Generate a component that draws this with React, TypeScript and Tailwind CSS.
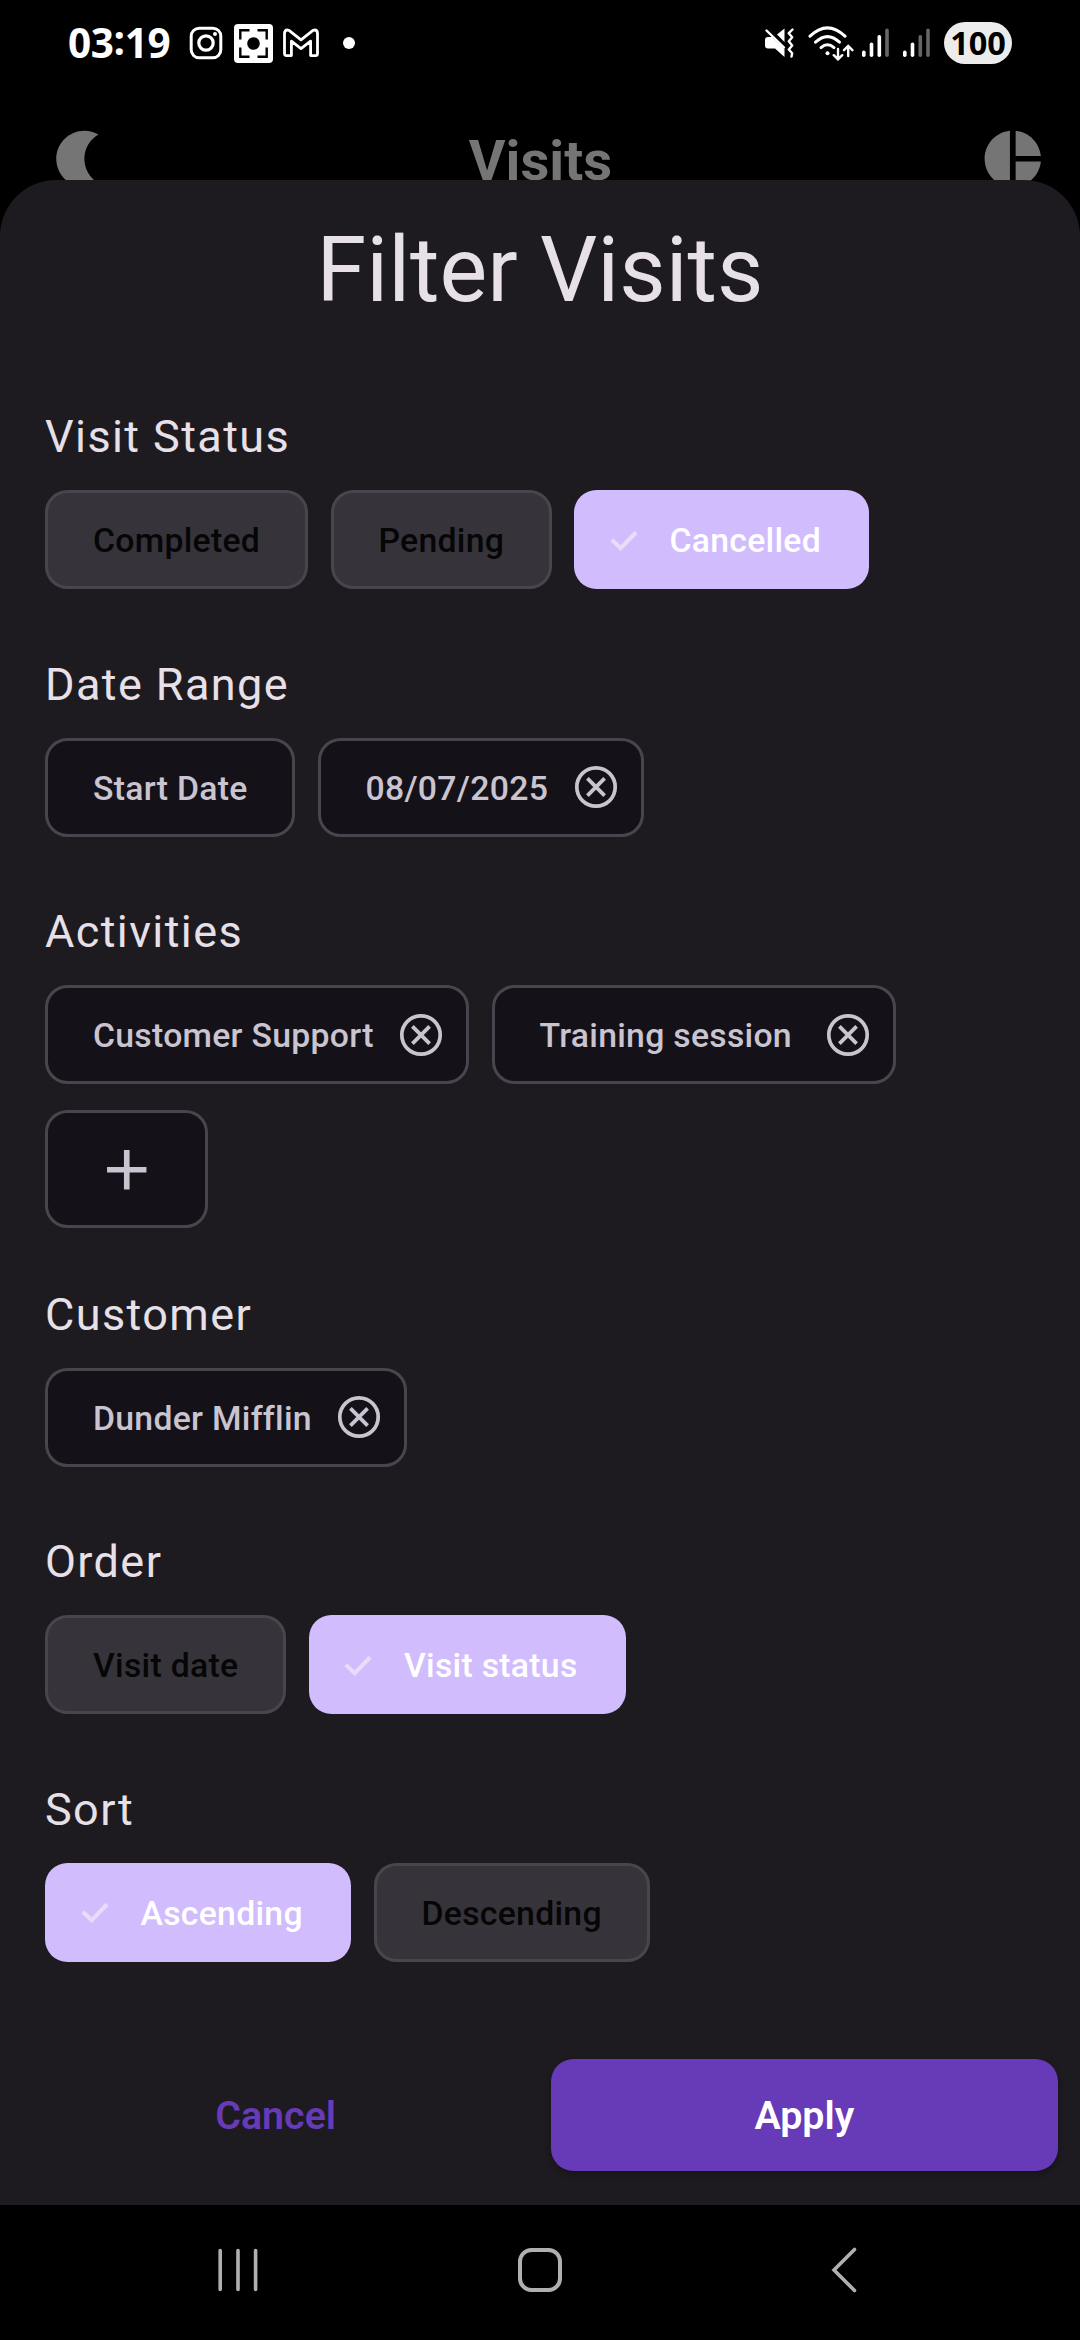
import type { ReactNode } from "react";

function Close() {
  return (
    <svg viewBox="0 0 50 50" className="h-[50px] w-[50px] shrink-0" fill="none" stroke="#cac4d0">
      <circle cx="25" cy="25" r="19.2" strokeWidth="3.7" />
      <path d="M16.4 16.4 L33.6 33.6 M33.6 16.4 L16.4 33.6" strokeWidth="3.8" />
    </svg>
  );
}

const chipBase =
  "flex h-[99px] shrink-0 items-center rounded-[22.5px] text-[33.75px] font-medium tracking-[0.28px] whitespace-nowrap";

function Disabled({ width, children }: { width: string; children: ReactNode }) {
  return (
    <button className={`${chipBase} ${width} border-[3px] border-[#49454f] bg-[#36333a] pt-[4px] pl-[45px] text-[#060607]`}>
      {children}
    </button>
  );
}

function Selected({ width, children }: { width: string; children: ReactNode }) {
  return (
    <button className={`${chipBase} ${width} bg-[#d1bcfd] pl-[34.5px] text-white`}>
      <svg viewBox="0 0 30 24" className="mr-[31px] h-[24px] w-[30px] shrink-0">
        <path d="M2.7 11.8 L11.7 20.2 L27.2 4.2" fill="none" stroke="#e8ddf8" strokeWidth="4.1" />
      </svg>
      <span className="pt-[4px]">{children}</span>
    </button>
  );
}

function Outlined({ width, removable, children }: { width: string; removable?: boolean; children: ReactNode }) {
  return (
    <button
      className={`${chipBase} ${width} justify-between border-[3px] border-[#49454f] bg-[#141218] pr-[20px] pl-[45px] text-[#cac4d0]`}
    >
      <span className="pt-[4px]">{children}</span>
      {removable && <Close />}
    </button>
  );
}

function Section({ title, height, children }: { title: string; height: string; children: ReactNode }) {
  return (
    <section className={`${height} shrink-0`}>
      <h2 className="text-[45px] leading-[67px] tracking-[1.4px] text-[#e7e0e8]">{title}</h2>
      <div className="mt-[20.25px] flex flex-wrap gap-x-[22.5px] gap-y-[26px]">{children}</div>
    </section>
  );
}

function StatusBar() {
  return (
    <div className="flex h-[86px] shrink-0 items-center justify-between pr-[68px] pl-[68px]">
      <div className="flex items-center">
        <span className="w-[103px] font-['Open_Sans',sans-serif] text-[40.5px] leading-none font-bold tracking-[-0.4px] whitespace-nowrap text-white">
          03<span className="relative -top-[3px]">:</span>19
        </span>
        <svg viewBox="0 0 34 34" className="ml-[18px] h-[34px] w-[34px]" fill="none" stroke="white">
          <rect x="2.2" y="2.2" width="29.6" height="29.6" rx="8" strokeWidth="3" />
          <circle cx="17" cy="17" r="7.2" strokeWidth="3.2" />
          <circle cx="26" cy="8" r="2" fill="white" stroke="none" />
        </svg>
        <svg viewBox="0 0 39 39" className="ml-[10.5px] h-[39px] w-[39px]">
          <rect width="39" height="39" rx="4" fill="white" />
          <circle cx="19.5" cy="19.5" r="6.3" fill="black" />
          <path
            d="M6.3 15.5 V6.3 H15.5 M23.5 6.3 H32.7 V15.5 M32.7 23.5 V32.7 H23.5 M15.5 32.7 H6.3 V23.5"
            fill="none"
            stroke="black"
            strokeWidth="2.4"
          />
        </svg>
        <svg viewBox="0 0 38 30" className="ml-[9px] h-[30px] w-[38px]">
          <path
            d="M2.5 5.5 Q2.5 2 5.5 2 L7 2.4 L19 11.8 L31 2.4 L32.5 2 Q35.5 2 35.5 5.5 V25.5 Q35.5 27.6 33.5 27.6 H28.6 V13.2 L19 20.6 L9.4 13.2 V27.6 H4.5 Q2.5 27.6 2.5 25.5 Z"
            fill="none"
            stroke="white"
            strokeWidth="2.8"
            strokeLinejoin="round"
          />
        </svg>
        <span className="ml-[23.5px] h-[12px] w-[12px] rounded-full bg-white" />
      </div>
      <div className="flex items-center">
        <svg viewBox="0 0 30 30" className="h-[30px] w-[30px]">
          <path d="M1 12 Q1 9 4 9 H8 L20.5 21 V29 L11 20.5 H4 Q1 20.5 1 17.5 Z" fill="white" />
          <path d="M13 6.5 L20.5 0.5 V14 Z" fill="white" />
          <path d="M2.5 2.5 L20 19.5" stroke="white" strokeWidth="2.4" strokeLinecap="round" />
          <path
            d="M28.5 1.5 L24.8 5.2 L28.2 9.2 L24.8 13.2 L28.2 17.5 L24.8 21.5 L28.2 25.2 L27.5 28.5"
            fill="none"
            stroke="white"
            strokeWidth="2.4"
            strokeLinecap="round"
            strokeLinejoin="round"
          />
        </svg>
        <svg viewBox="0 0 46 36" className="ml-[14px] h-[36px] w-[46px]" fill="none" stroke="white" strokeLinecap="round">
          <path d="M2 11.2 Q19.5 -5.5 37 11.2" strokeWidth="3" />
          <path d="M7.5 17.2 Q19.5 6 31.5 17.2" strokeWidth="3" />
          <path d="M13 22.6 Q19.5 16.8 26 22.6" strokeWidth="3" />
          <circle cx="19.5" cy="28.2" r="2" fill="white" stroke="none" />
          <path d="M30 24 V34 M25.8 30.2 L30 34.4 L34.2 30.2 M40.2 31 V21.5 M36 25.2 L40.2 21 L44.4 25.2" strokeWidth="2.4" />
        </svg>
        <svg viewBox="0 0 28 30" className="ml-[8px] h-[30px] w-[28px]">
          <rect x="0" y="22.5" width="3.6" height="6.5" rx="1.8" fill="white" />
          <rect x="7.7" y="14.5" width="3.6" height="14.5" rx="1.8" fill="white" />
          <rect x="15.5" y="7" width="3.6" height="22" rx="1.8" fill="white" />
          <rect x="23.2" y="0.5" width="3.6" height="28.5" rx="1.8" fill="#666" />
        </svg>
        <svg viewBox="0 0 28 30" className="ml-[13px] h-[30px] w-[28px]">
          <rect x="0" y="22.5" width="3.6" height="6.5" rx="1.8" fill="white" />
          <rect x="7.7" y="14.5" width="3.6" height="14.5" rx="1.8" fill="white" />
          <rect x="15.5" y="7" width="3.6" height="22" rx="1.8" fill="#666" />
          <rect x="23.2" y="0.5" width="3.6" height="28.5" rx="1.8" fill="#666" />
        </svg>
        <span className="ml-[13px] flex h-[42px] w-[68px] items-center justify-center rounded-full bg-[#ececec] font-['Open_Sans',sans-serif] text-[32.5px] leading-none font-bold text-black">
          100
        </span>
      </div>
    </div>
  );
}

export default function App() {
  return (
    <div className="flex h-[2340px] w-[1080px] flex-col overflow-hidden bg-black font-[Roboto,sans-serif]">
      <StatusBar />
      <header className="flex h-[94px] shrink-0 items-start justify-between pr-[33px] pl-[45px]">
        <svg viewBox="0 0 24 24" className="mt-[38.5px] h-[67.5px] w-[67.5px] fill-[#757575]">
          <path d="M14 2c1.82 0 3.53.5 5 1.35-2.99 1.73-5 4.95-5 8.65s2.01 6.92 5 8.65A9.973 9.973 0 0 1 14 22C8.48 22 4 17.52 4 12S8.48 2 14 2z" />
        </svg>
        <h1 className="mt-[39px] -ml-[11px] text-[56.25px] leading-[72px] font-bold text-[#757575]">Visits</h1>
        <svg viewBox="0 0 24 24" className="mt-[38.5px] h-[67.5px] w-[67.5px] fill-[#757575]">
          <path d="M11 2v20c-5.07-.5-9-4.79-9-10s3.93-9.5 9-10zm2.03 0v8.99H22c-.47-4.74-4.24-8.52-8.97-8.99zm0 11.01V22c4.74-.47 8.5-4.25 8.97-8.99h-8.97z" />
        </svg>
      </header>
      <main className="relative flex h-[2025px] shrink-0 flex-col rounded-t-[56.25px] bg-[#1d1b20]">
        <h2 className="mt-[35px] h-[112px] text-center text-[90px] leading-[112px] text-[#e7e0e8]">Filter Visits</h2>
        <div className="mt-[76px] flex flex-col px-[45px]">
          <Section title="Visit Status" height="h-[247.5px]">
            <Disabled width="w-[263px]">Completed</Disabled>
            <Disabled width="w-[221px]">Pending</Disabled>
            <Selected width="w-[295px]">Cancelled</Selected>
          </Section>
          <Section title="Date Range" height="h-[247.5px]">
            <Outlined width="w-[250px]">Start Date</Outlined>
            <Outlined width="w-[326px]" removable>08/07/2025</Outlined>
          </Section>
          <Section title="Activities" height="h-[382.5px]">
            <Outlined width="w-[424px]" removable>Customer Support</Outlined>
            <Outlined width="w-[404px]" removable>Training session</Outlined>
            <button className="flex h-[118px] w-[163px] items-center justify-center rounded-[22.5px] border-[3px] border-[#49454f] bg-[#141218]">
              <svg viewBox="0 0 24 24" className="h-[67.5px] w-[67.5px] fill-[#cac4d0]">
                <path d="M19 13h-6v6h-2v-6H5v-2h6V5h2v6h6v2z" />
              </svg>
            </button>
          </Section>
          <Section title="Customer" height="h-[247.5px]">
            <Outlined width="w-[362px]" removable>Dunder Mifflin</Outlined>
          </Section>
          <Section title="Order" height="h-[247.5px]">
            <Disabled width="w-[241px]">Visit date</Disabled>
            <Selected width="w-[317px]">Visit status</Selected>
          </Section>
          <Section title="Sort" height="h-[247.5px]">
            <Selected width="w-[306px]">Ascending</Selected>
            <Disabled width="w-[276px]">Descending</Disabled>
          </Section>
        </div>
        <div className="mt-[35.5px] grid h-[112.5px] grid-cols-2 gap-[22.5px] px-[22.5px] text-[39.4px]">
          <button className="pt-[2px] font-semibold text-[#673ab7]">Cancel</button>
          <button className="rounded-[22.5px] bg-[#673ab7] pt-[2px] font-semibold text-white shadow-[0_3px_6px_rgba(0,0,0,0.3)]">
            Apply
          </button>
        </div>
      </main>
      <nav className="flex h-[135px] shrink-0 items-center pb-[5px] pl-[218px]">
        <svg viewBox="0 0 40 44" className="h-[44px] w-[40px]" stroke="#b0b0b0" strokeWidth="3.6" strokeLinecap="round">
          <path d="M2.2 2.5 V41.5 M20 2.5 V41.5 M37.6 2.5 V41.5" />
        </svg>
        <svg viewBox="0 0 46 46" className="ml-[259px] h-[46px] w-[46px]">
          <rect x="3" y="3" width="40" height="40" rx="11.5" fill="none" stroke="#b0b0b0" strokeWidth="4" />
        </svg>
        <svg viewBox="0 0 26 46" className="ml-[268px] h-[46px] w-[26px]">
          <path d="M23.5 2.5 L3 23 L23.5 43.5" fill="none" stroke="#b0b0b0" strokeWidth="3.6" strokeLinecap="round" />
        </svg>
      </nav>
    </div>
  );
}
